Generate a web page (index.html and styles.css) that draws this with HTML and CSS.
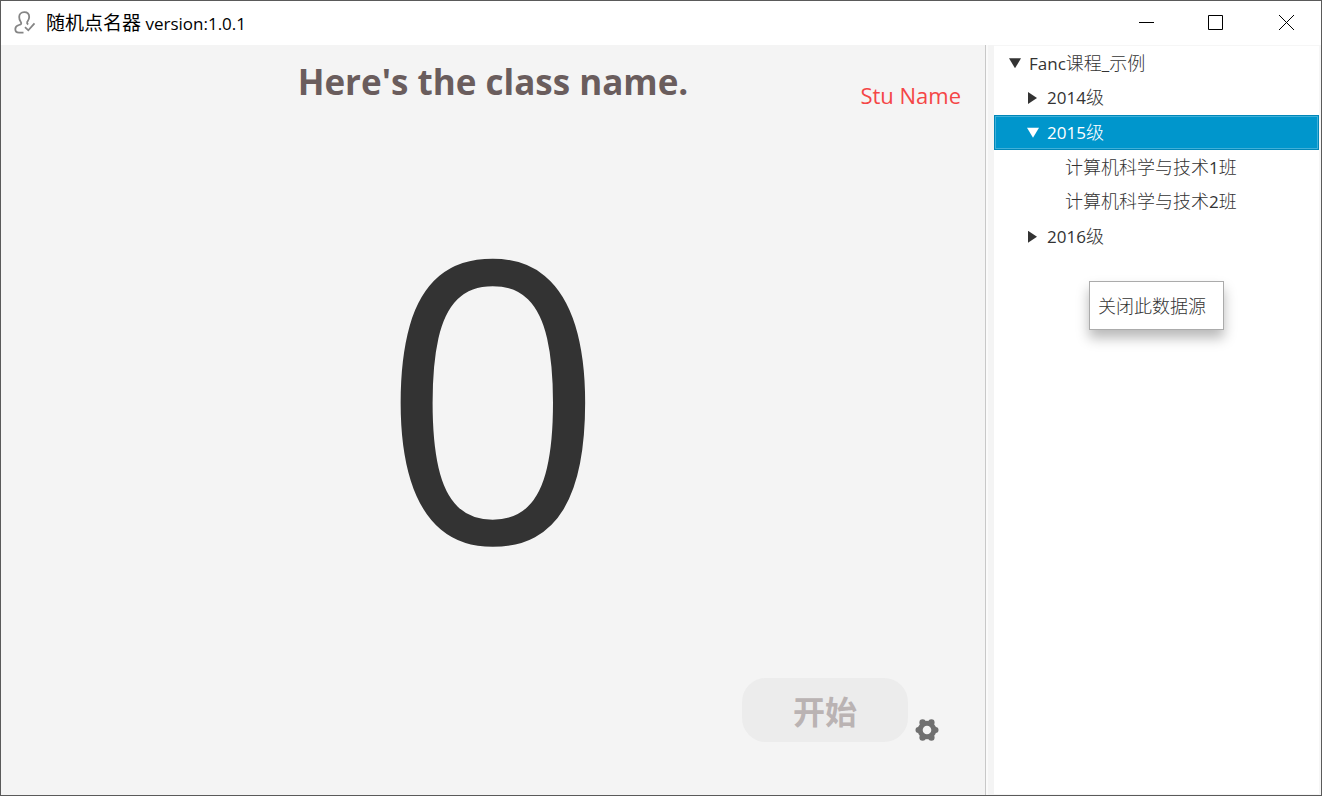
FILE: index.html
```html
<!DOCTYPE html>
<html lang="zh-CN">
<head>
<meta charset="utf-8">
<title>随机点名器 version:1.0.1</title>
<link rel="stylesheet" href="styles.css">
</head>
<body>
<div class="window">
  <header class="titlebar">
    <svg class="app-icon" viewBox="0 0 22 24" aria-hidden="true">
      <path d="M9.500 21.600H5C2.500 21.600 1.300 20.300 1.300 18C1.300 15.500 3 14.600 5 14C7.500 13.300 7.700 12.500 6.800 11C5.800 9.800 5.200 8 5.200 6C5.200 3.200 7 1.200 10.200 1.200C13.400 1.200 15.200 3.200 15.200 6C15.200 8.500 14 9.800 13.200 11C12.800 12 13.200 12.800 14.200 13.400"/>
      <path d="M11 16.200L14.300 19.300L20.500 12.300"/>
    </svg>
    <h1 class="title"><span class="title-name">随机点名器</span> version:1.0.1</h1>
    <div class="window-buttons">
      <button class="window-button" type="button" aria-label="最小化"><svg viewBox="0 0 16 16"><path d="M1 7.500H16"/></svg></button>
      <button class="window-button" type="button" aria-label="最大化"><svg viewBox="0 0 16 16"><path d="M.5 .5H14.500V14.500H.5Z"/></svg></button>
      <button class="window-button" type="button" aria-label="关闭"><svg viewBox="0 0 16 16"><path d="M1 0L16 15M16 0L1 15"/></svg></button>
    </div>
  </header>
  <div class="content">
    <main class="stage">
      <div class="stage-head">
        <h2 class="class-name">Here's the class name.</h2>
        <span class="student">Stu Name</span>
      </div>
      <output class="counter">0</output>
      <div class="actions">
        <button class="start" type="button" disabled>开始</button>
        <button class="settings" type="button" aria-label="设置">
          <svg viewBox="-12 -12 24 24">
            <circle class="gear-ring" r="6.800"/>
            <circle cx="8.600" cy="0" r="2.900"/>
            <circle cx="-8.600" cy="0" r="2.900"/>
            <circle cx="4.400" cy="7.500" r="3.200"/>
            <circle cx="-4.400" cy="7.500" r="3.200"/>
            <circle cx="4.400" cy="-7.500" r="3.200"/>
            <circle cx="-4.400" cy="-7.500" r="3.200"/>
          </svg>
        </button>
      </div>
    </main>
    <div class="divider"></div>
    <aside class="sidebar">
      <ul class="tree" role="tree">
        <li class="node" role="treeitem" aria-expanded="true"><span class="arrow arrow-open"></span><span>Fanc<span class="cjk">课程</span>_<span class="cjk">示例</span></span></li>
        <li class="node level-1" role="treeitem"><span class="arrow"></span><span>2014<span class="cjk">级</span></span></li>
        <li class="node level-1 selected" role="treeitem" aria-selected="true"><span class="arrow arrow-open"></span><span>2015<span class="cjk">级</span></span></li>
        <li class="node level-2" role="treeitem"><span><span class="cjk">计算机科学与技术</span>1<span class="cjk">班</span></span></li>
        <li class="node level-2" role="treeitem"><span><span class="cjk">计算机科学与技术</span>2<span class="cjk">班</span></span></li>
        <li class="node level-1" role="treeitem"><span class="arrow"></span><span>2016<span class="cjk">级</span></span></li>
      </ul>
      <button class="context-menu cjk" type="button">关闭此数据源</button>
    </aside>
  </div>
</div>
</body>
</html>
```
FILE: styles.css
```css
* {
  box-sizing: border-box;
}

body {
  margin: 0;
  font-family: "Open Sans", "Noto Sans CJK SC", sans-serif;
  color: #333;
}

button {
  padding: 0;
  border: 0;
  background: none;
  font-family: inherit;
  color: inherit;
}

.window {
  display: flex;
  flex-direction: column;
  min-height: 100vh;
  border: 1px solid #5a5a5a;
  background: #fff;
}

.titlebar {
  display: flex;
  align-items: center;
  height: 44px;
  padding-left: 13px;
}

.app-icon {
  width: 22px;
  height: 24px;
  margin-right: 10px;
  fill: none;
  stroke: #858585;
  stroke-width: 1.8;
}

.title {
  margin: 0;
  font-size: 17px;
  line-height: 24px;
  font-weight: 400;
  color: #000;
}

.title-name {
  font-size: 19px;
}

.window-buttons {
  display: flex;
  margin-left: auto;
}

.window-button {
  display: flex;
  align-items: center;
  justify-content: center;
  width: 70px;
  height: 44px;
}

.window-button svg {
  width: 16px;
  height: 16px;
  overflow: visible;
  fill: none;
  stroke: #000;
}

.content {
  display: flex;
  flex: 1;
  background: #f4f4f4;
}

.stage {
  display: flex;
  flex: 3;
  flex-direction: column;
}

.stage-head {
  display: grid;
  grid-template-columns: 1fr auto 1fr;
  padding-right: 24px;
  padding-left: 24px;
  height: 76px;
}

.class-name {
  grid-column: 2;
  margin: 0;
  padding-top: 13px;
  font-size: 35px;
  line-height: 48px;
  font-weight: 700;
  color: #6a5d5d;
}

.student {
  justify-self: end;
  padding-top: 35px;
  font-size: 22px;
  line-height: 30px;
  color: #f44646;
}

.counter {
  display: flex;
  flex: 1;
  align-items: center;
  justify-content: center;
  padding-bottom: 18px;
  font-size: 392px;
  line-height: 400px;
}

.actions {
  display: flex;
  align-items: flex-end;
  justify-content: flex-end;
  gap: 7px;
  padding: 0 46px 53px 0;
}

.start {
  width: 166px;
  height: 64px;
  border-radius: 24px;
  background: #ececec;
  font-size: 32px;
  font-weight: 700;
  color: #bab3b3;
}

.settings {
  display: flex;
  width: 24px;
  height: 24px;
}

.settings svg {
  width: 24px;
  height: 24px;
  fill: #707070;
}

.settings .gear-ring {
  fill: none;
  stroke: #707070;
  stroke-width: 5;
}

.divider {
  width: 9px;
  border-right: 6px solid #f4f4f4;
  border-left: 1px solid #c8c8c8;
  background: #fafafa;
}

.sidebar {
  position: relative;
  flex: 0 0 auto;
  width: calc(25% - 3px);
  border: solid #f6f6f6;
  border-width: 1px 2px 1px 0;
  background: #fff;
}

.tree {
  display: grid;
  grid-auto-rows: 1fr;
  height: 208px;
  margin: 0;
  padding: 0;
  list-style: none;
  font-size: 17px;
  line-height: 30px;
}

.node {
  display: flex;
  align-items: center;
  gap: 8px;
  padding-left: 14px;
  border: 1px solid transparent;
}

.level-1 {
  padding-left: 32px;
}

.level-2 {
  padding-left: 70px;
}

.selected {
  border-color: #0087b8;
  background: #0096cc;
  box-shadow: inset 0 0 0 1px #40b0d9;
  color: #fff;
}

.cjk {
  font-size: 18px;
  font-weight: 300;
}

.arrow {
  width: 12px;
  height: 12px;
  background: #333;
  clip-path: polygon(1px 0, 10px 6px, 1px 12px);
}

.arrow-open {
  clip-path: polygon(0 1px, 12px 1px, 6px 11px);
}

.selected .arrow {
  background: #fff;
}

.context-menu {
  position: absolute;
  top: 235px;
  left: 95px;
  padding: 8px 17px 7px 8px;
  border: 1px solid #ababab;
  background: #fff;
  box-shadow: 0 8px 12px rgba(0, 0, 0, 0.28);
  line-height: 32px;
}
```
